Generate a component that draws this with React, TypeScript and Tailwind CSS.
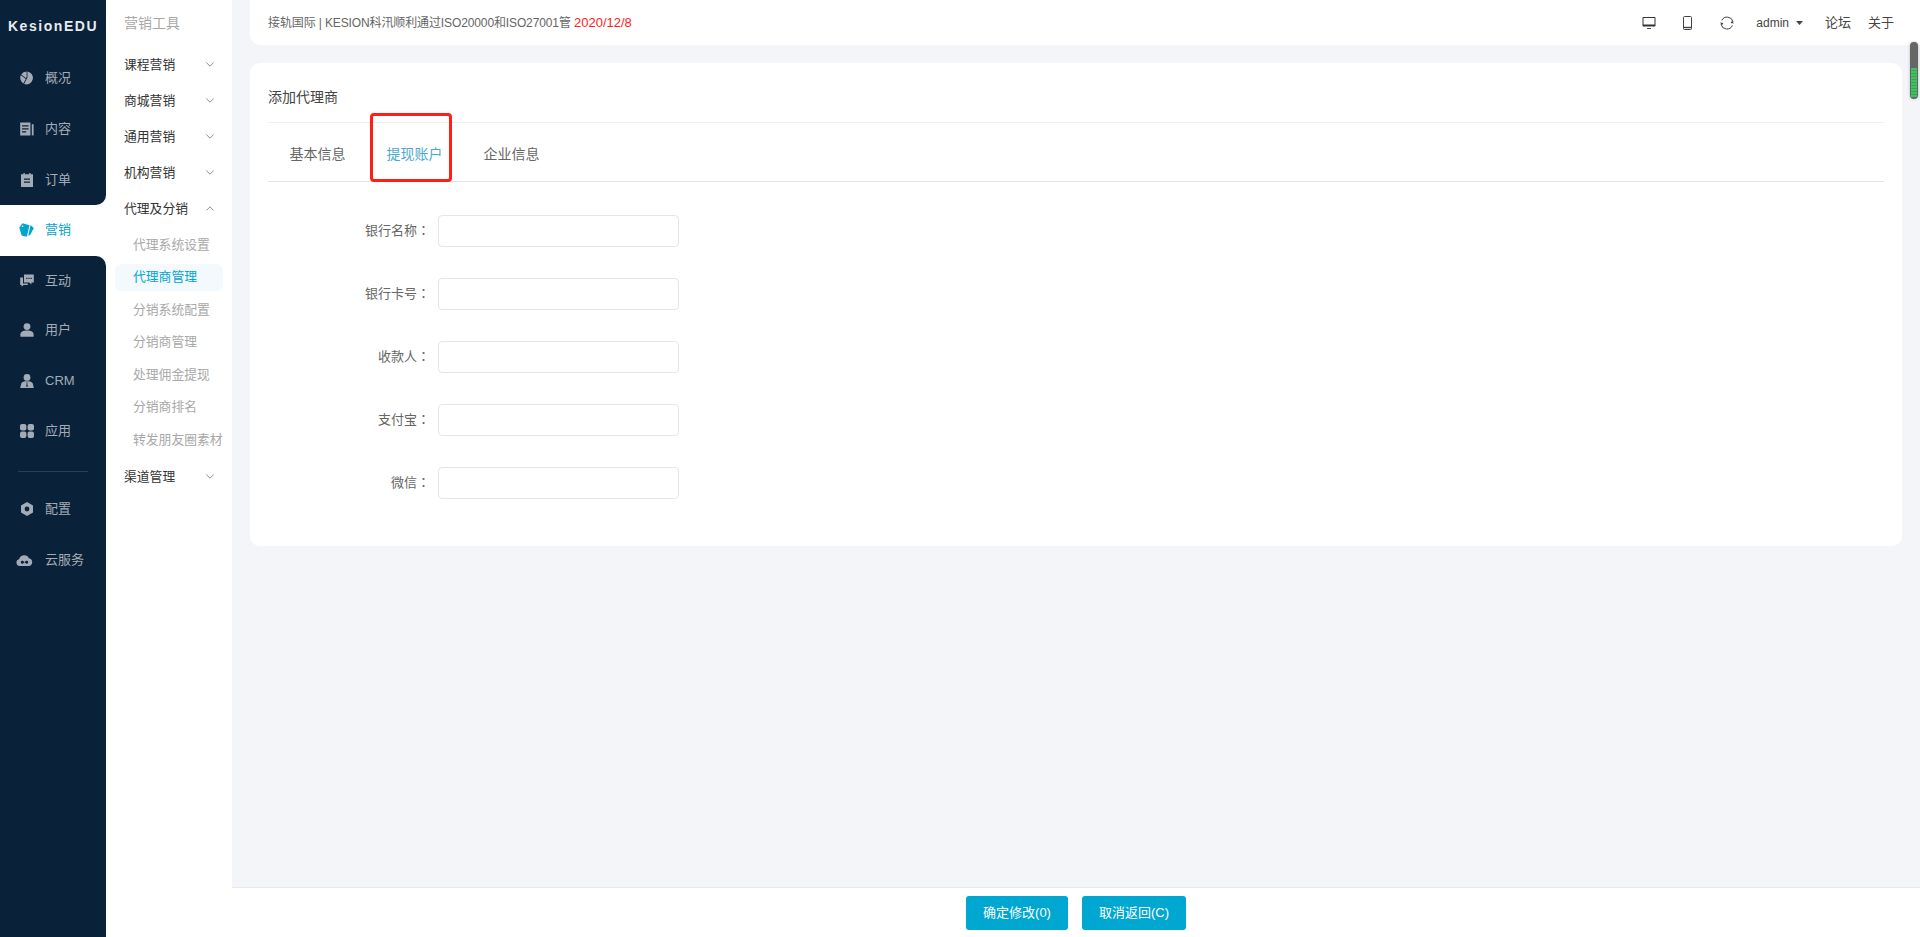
import React from "react";

const FONT = '"Liberation Sans", "Noto Sans CJK SC", sans-serif';

type IconProps = { className?: string };

const PieIcon = ({ className }: IconProps) => (
  <svg viewBox="0 0 14 14" className={className} fill="currentColor">
    <path d="M6.6 0.5A6.5 6.5 0 0 0 1.2 3.4L5.7 6.9L6.6 6.3Z" />
    <path d="M0.8 4.3A6.5 6.5 0 0 0 3.3 12.4L5.8 7.9L5.2 7.4Z" />
    <path d="M7.4 0.5A6.5 6.5 0 1 1 4.1 13L6.9 7.5L7.4 7Z" />
  </svg>
);

const ContentIcon = ({ className }: IconProps) => (
  <svg viewBox="0 0 14 14" className={className} fill="currentColor" fillRule="evenodd">
    <path d="M0.2 0.6H10.4V13.4H0.2ZM2 3.2V4.5H8.6V3.2ZM2 6.2V7.5H8.6V6.2ZM2 9.2V10.5H6.2V9.2Z" />
    <rect x="11.8" y="2.2" width="1.8" height="11.2" />
  </svg>
);

const OrderIcon = ({ className }: IconProps) => (
  <svg viewBox="0 0 14 14" className={className} fill="currentColor" fillRule="evenodd">
    <path d="M1 1.2H3.4V0H4.8V1.2H9.2V0H10.6V1.2H13V14H1ZM4 5.6V6.8H10V5.6ZM4 8.6V9.8H10V8.6Z" />
  </svg>
);

const TagIcon = ({ className }: IconProps) => (
  <svg viewBox="0 0 15 14" className={className} fill="currentColor" fillRule="evenodd">
    <path d="M0.3 4.5L3.5 0.3L10.5 2.2L7.8 13.8L2.6 12.6ZM3.6 2.4A0.8 0.8 0 1 0 3.6 4A0.8 0.8 0 1 0 3.6 2.4Z" />
    <path d="M11.5 2L14.8 5L11.5 11.5L9.2 13Z" />
  </svg>
);

const ChatIcon = ({ className }: IconProps) => (
  <svg viewBox="0 0 14 14" className={className} fill="currentColor" fillRule="evenodd">
    <path d="M4 0.4H13.8V8.6H11.4V10.4L9.2 8.6H4ZM6.2 3.8V5H7.4V3.8ZM8.4 3.8V5H9.6V3.8ZM10.6 3.8V5H11.8V3.8Z" />
    <path d="M0.2 3.6H3V9.6H7.8V11H3.6L1.6 12.8V11H0.2Z" />
  </svg>
);

const UserIcon = ({ className }: IconProps) => (
  <svg viewBox="0 0 14 14" className={className} fill="currentColor">
    <circle cx="7" cy="3.6" r="3.4" />
    <path d="M0.4 13.8V11.6C0.4 9 3 7.6 7 7.6C11 7.6 13.6 9 13.6 11.6V13.8Z" />
  </svg>
);

const CrmIcon = ({ className }: IconProps) => (
  <svg viewBox="0 0 14 14" className={className} fill="currentColor" fillRule="evenodd">
    <circle cx="7" cy="3.4" r="3.4" />
    <path d="M0.2 14L1.2 9.6C1.6 8.2 3.4 7.4 5.4 7.2H8.6C10.6 7.4 12.4 8.2 12.8 9.6L13.8 14ZM6.4 8.4L6.7 9.6L6.2 12.8H7.8L7.3 9.6L7.6 8.4Z" />
  </svg>
);

const AppsIcon = ({ className }: IconProps) => (
  <svg viewBox="0 0 14 14" className={className} fill="currentColor">
    <rect x="0" y="0" width="6.4" height="6.4" rx="2" />
    <rect x="7.6" y="0" width="6.4" height="6.4" rx="2" />
    <rect x="0" y="7.6" width="6.4" height="6.4" rx="2" />
    <rect x="7.6" y="7.6" width="6.4" height="6.4" rx="2" />
  </svg>
);

const GearIcon = ({ className }: IconProps) => (
  <svg viewBox="0 0 14 14" className={className} fill="currentColor" fillRule="evenodd">
    <path d="M7 0L13 3.4V10.6L7 14L1 10.6V3.4ZM7 4.6A2.4 2.4 0 1 0 7 9.4A2.4 2.4 0 1 0 7 4.6Z" />
  </svg>
);

const CloudIcon = ({ className }: IconProps) => (
  <svg viewBox="0 0 18 14" className={className} fill="currentColor" fillRule="evenodd">
    <path d="M4 13A3.7 3.7 0 0 1 3.2 5.7A5.6 5.6 0 0 1 13.8 4.6A4.3 4.3 0 0 1 14 13ZM6.6 7.4A1.6 1.6 0 1 0 6.6 10.6C7.4 10.6 8 10 9 9C10 8 10.6 7.4 11.4 7.4A1.6 1.6 0 1 1 11.4 10.6C10.6 10.6 10 10 9 9C8 8 7.4 7.4 6.6 7.4Z" />
  </svg>
);

const Chevron = ({ up }: { up?: boolean }) => (
  <svg viewBox="0 0 8 5" className="w-2 h-[5px] text-[#7c8087]" fill="none" stroke="currentColor" strokeWidth="0.9">
    <polyline points={up ? "0.3,4.5 4,0.8 7.7,4.5" : "0.3,0.5 4,4.2 7.7,0.5"} />
  </svg>
);

const NavRow = ({
  icon,
  label,
  className = "",
}: {
  icon: React.ReactNode;
  label: string;
  className?: string;
}) => (
  <div className={`flex items-center pl-5 text-[13px] ${className}`}>
    <span className="w-[13px] flex justify-center shrink-0">{icon}</span>
    <span className="ml-3 whitespace-nowrap">{label}</span>
  </div>
);

const iconCls = "w-[14px] h-[14px] shrink-0";

const MenuGroup = ({ label, up }: { label: string; up?: boolean }) => (
  <div className="h-9 flex items-center justify-between pl-[18px] pr-[18px] text-[12.8px] text-[#333]">
    <span className="pt-[2px]">{label}</span>
    <Chevron up={up} />
  </div>
);

const SubItem = ({ label, active }: { label: string; active?: boolean }) => (
  <div
    className={`mx-[9px] h-[27px] pl-[18px] flex items-center text-[12.8px] whitespace-nowrap rounded-md ${
      active ? "bg-[#f3f9fc] text-[#00a6d0]" : "text-[#a8a8a8]"
    }`}
  >
    {label}
  </div>
);

const FormRow = ({ label }: { label: string }) => (
  <div className="flex items-center h-8 mb-[31px]">
    <label className="w-[162px] pb-[2px] text-right text-[13px] text-[#666]">
      {label}
      <span className="font-['Noto_Sans_CJK_TC']">：</span>
    </label>
    <input
      type="text"
      className="ml-2 w-[241px] h-8 rounded-[4px] border border-[#e6e6e6] bg-white outline-none"
    />
  </div>
);

export default function App() {
  return (
    <div className="relative flex h-[937px] w-full overflow-hidden bg-white" style={{ fontFamily: FONT }}>
      {/* primary navigation */}
      <aside className="w-[106px] shrink-0 flex flex-col bg-white text-[#a3abb6]">
        <div className="h-[205px] bg-[#0a2239] rounded-br-[10px]">
          <div className="h-[53px] pb-[1px] flex items-center justify-center text-[14px] font-bold text-[#e8ebee] tracking-[1.55px]">
            KesionEDU
          </div>
          <NavRow className="h-[50px]" icon={<PieIcon className={iconCls} />} label="概况" />
          <NavRow className="h-[51px]" icon={<ContentIcon className={iconCls} />} label="内容" />
          <NavRow className="h-[51px]" icon={<OrderIcon className={iconCls} />} label="订单" />
        </div>
        <NavRow
          className="h-[51px] pb-[2px] text-[#00a6d0]"
          icon={<TagIcon className="w-[15px] h-[14px] shrink-0 text-[#00a6d0]" />}
          label="营销"
        />
        <div className="flex-1 bg-[#0a2239] rounded-tr-[10px]">
          <NavRow className="h-[49px]" icon={<ChatIcon className={iconCls} />} label="互动" />
          <NavRow className="h-[50px]" icon={<UserIcon className={iconCls} />} label="用户" />
          <NavRow className="h-[51px]" icon={<CrmIcon className={iconCls} />} label="CRM" />
          <NavRow className="h-[50px]" icon={<AppsIcon className={iconCls} />} label="应用" />
          <div className="mx-[18px] mt-[15px] mb-[11px] h-px bg-[#2a3e53]" />
          <NavRow className="h-[51px]" icon={<GearIcon className={iconCls} />} label="配置" />
          <NavRow className="h-[52px]" icon={<CloudIcon className="w-[17px] h-[13px] shrink-0 -ml-[4px]" />} label="云服务" />
        </div>
      </aside>

      {/* secondary menu */}
      <nav className="w-[126px] shrink-0 bg-white">
        <div className="h-[46px] flex items-center pl-[18px] text-[14px] text-[#a8a8a8]">营销工具</div>
        <MenuGroup label="课程营销" />
        <MenuGroup label="商城营销" />
        <MenuGroup label="通用营销" />
        <MenuGroup label="机构营销" />
        <MenuGroup label="代理及分销" up />
        <div className="flex flex-col gap-[5.5px] py-[5px]">
          <SubItem label="代理系统设置" />
          <SubItem label="代理商管理" active />
          <SubItem label="分销系统配置" />
          <SubItem label="分销商管理" />
          <SubItem label="处理佣金提现" />
          <SubItem label="分销商排名" />
          <SubItem label="转发朋友圈素材" />
        </div>
        <MenuGroup label="渠道管理" />
      </nav>

      {/* main column */}
      <main className="flex-1 min-w-0 flex flex-col bg-[#f4f5f9]">
        <header className="ml-[18px] h-[45px] shrink-0 bg-white rounded-bl-[10px] flex items-center justify-between pl-[18px] pr-[26px] text-[12px]">
          <div className="text-[#666] whitespace-nowrap">
            <span className="tracking-[-0.12px]">接轨国际 | KESION科汛顺利通过ISO20000和ISO27001管 </span>
            <span className="text-[13px] text-[#f22]">2020/12/8</span>
          </div>
          <div className="flex items-center text-[#444]">
            <svg viewBox="0 0 14 14" className="w-[14px] h-[14px]" fill="none" stroke="currentColor">
              <rect x="0.5" y="1" width="13" height="9.5" rx="0.8" fill="#333" stroke="none" />
              <rect x="1.5" y="2" width="11" height="6.5" fill="#fff" stroke="none" />
              <path d="M5 12.5H9" strokeWidth="1" />
            </svg>
            <svg viewBox="0 0 9 14" className="ml-[27px] w-[9px] h-[14px]" fill="none" stroke="#444">
              <rect x="0.5" y="0.5" width="8" height="13" rx="1" strokeWidth="1" />
              <path d="M0.5 11.5H8.5" strokeWidth="1.4" />
            </svg>
            <svg viewBox="0 0 14 14" className="ml-[28px] w-[14px] h-[14px]" fill="none" stroke="#444" strokeWidth="1">
              <path d="M1 8.2A6 6 0 0 0 12.4 9.4" />
              <path d="M13 5.8A6 6 0 0 0 1.8 4.4" />
              <path d="M0 6.6L2 9.2L3.4 7" fill="#444" stroke="none" />
              <path d="M14 7.4L12 4.8L10.6 7" fill="#444" stroke="none" />
            </svg>
            <span className="ml-[22px] text-[12px]">admin</span>
            <svg viewBox="0 0 7 4" className="ml-[7px] w-[7px] h-1" fill="#444">
              <path d="M0 0H7L3.5 4Z" />
            </svg>
            <span className="ml-[22px] text-[13px]">论坛</span>
            <span className="ml-[17px] text-[13px]">关于</span>
          </div>
        </header>

        <section className="mt-[18px] mx-[18px] h-[483px] shrink-0 bg-white rounded-[10px] px-[18px]">
          <div className="h-[60px] pt-[24px] border-b border-[#eeeeee] text-[14px] leading-[20px] text-[#444]">
            添加代理商
          </div>
          <div className="relative h-[59px] pt-[5px] pl-px border-b border-[#e5e5e5] flex items-center text-[14px] text-[#666]">
            <div className="w-[97px] flex justify-center">基本信息</div>
            <div className="w-[97px] flex justify-center text-[#4ba9c8]">提现账户</div>
            <div className="w-[97px] flex justify-center">企业信息</div>
            <div className="absolute left-[102px] -top-[10px] w-[82px] h-[69px] border-[3px] border-[#ff1f14] rounded-[4px]" />
          </div>
          <form className="pt-[33px]">
            <FormRow label="银行名称" />
            <FormRow label="银行卡号" />
            <FormRow label="收款人" />
            <FormRow label="支付宝" />
            <FormRow label="微信" />
          </form>
        </section>

        <div className="flex-1" />

        <footer className="h-[50px] shrink-0 bg-white border-t border-[#e8e8f0] flex items-center justify-center gap-[14px] text-[13px] text-white">
          <button type="button" className="h-[34px] w-[102px] rounded-[3px] bg-[#00a7d0]">确定修改(0)</button>
          <button type="button" className="h-[34px] w-[104px] rounded-[3px] bg-[#00a7d0]">取消返回(C)</button>
        </footer>
      </main>

      {/* page scroll indicator */}
      <div className="absolute right-[2px] top-[42px] w-2 h-[57px] rounded-full bg-[#666] overflow-hidden shadow-[0_0_3px_rgba(0,0,0,0.25)]">
        <div className="absolute left-[1px] right-[1px] top-[26px] bottom-[2px] bg-[repeating-linear-gradient(to_bottom,#35c759_0px,#35c759_2px,#4b9a62_2px,#4b9a62_3px)]" />
      </div>
    </div>
  );
}
